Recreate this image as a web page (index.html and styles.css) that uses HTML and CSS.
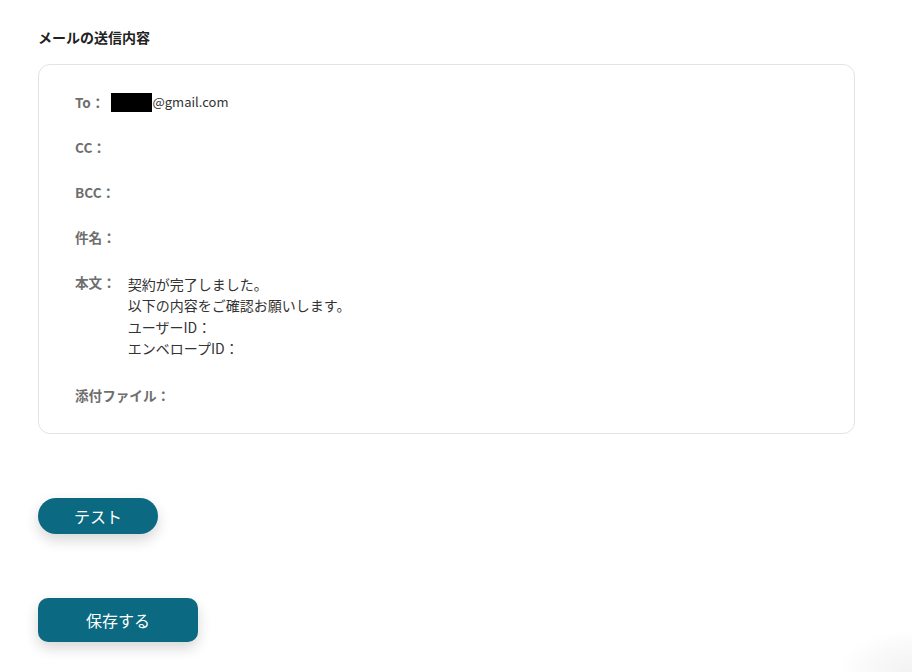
FILE: index.html
```html
<!DOCTYPE html>
<html lang="ja">
<head>
<meta charset="utf-8">
<link rel="stylesheet" href="styles.css">
</head>
<body>
<main class="page">
  <h2 class="title">メールの送信内容</h2>
  <section class="card">
    <div class="row"><span class="label">To：</span><span class="value to"><span class="redact"></span>@gmail.com</span></div>
    <div class="row"><span class="label">CC：</span></div>
    <div class="row"><span class="label">BCC：</span></div>
    <div class="row"><span class="label">件名：</span></div>
    <div class="row body-row"><span class="label">本文：</span>
      <div class="value body">
        <div>契約が完了しました。</div>
        <div>以下の内容をご確認お願いします。</div>
        <div>ユーザーID：</div>
        <div>エンベロープID：</div>
      </div>
    </div>
    <div class="row"><span class="label">添付ファイル：</span></div>
  </section>
  <div class="actions">
    <button class="btn btn-test">テスト</button>
    <button class="btn btn-save">保存する</button>
  </div>
</main>
<div class="corner-shadow"></div>
</body>
</html>
```
FILE: styles.css
```css
* { box-sizing: border-box; }
html, body { margin: 0; padding: 0; background: #fff; overflow: hidden; }
body {
  font-family: "Noto Sans CJK JP", "Noto Sans", sans-serif;
  color: #333;
  width: 912px;
  height: 672px;
  position: relative;
}
.page {
  padding: 26px 0 0 38px;
  display: flex;
  flex-direction: column;
}
.title {
  margin: 0;
  font-size: 14px;
  font-weight: 700;
  line-height: 22px;
  color: #222;
}
.card {
  margin-top: 16px;
  width: 817px;
  border: 1px solid #e3e3e3;
  border-radius: 12px;
  padding: 27px 36px 28px 36px;
  display: flex;
  flex-direction: column;
  gap: 25px;
}
.row {
  display: flex;
  align-items: flex-start;
  font-size: 13.6px;
  line-height: 20px;
}
.label {
  font-weight: 700;
  color: #6e6e6e;
  white-space: nowrap;
}
.value { color: #333; }
.to {
  margin-left: 7px;
  display: flex;
  align-items: center;
  font-size: 13px;
}
.redact {
  display: inline-block;
  width: 41px;
  height: 19px;
  background: #000;
}
.body-row .body {
  margin-left: 12px;
  margin-top: 2px;
  line-height: 21.4px;
  font-size: 14px;
}
.actions {
  display: flex;
  flex-direction: column;
  align-items: flex-start;
  margin-top: 64px;
  gap: 64px;
}
.btn {
  font-family: "Noto Sans CJK JP", "Noto Sans", sans-serif;
  border: none;
  color: #fff;
  background: #0b6a81;
  font-size: 16px;
  cursor: pointer;
  box-shadow: 0 6px 14px rgba(0, 0, 0, 0.16);
}
.btn-test {
  width: 120px;
  height: 36px;
  border-radius: 18px;
}
.btn-save {
  width: 160px;
  height: 44px;
  border-radius: 10px;
}
.corner-shadow {
  position: absolute;
  right: 0;
  bottom: 0;
  width: 70px;
  height: 40px;
  background: radial-gradient(ellipse at 100% 100%, rgba(0,0,0,0.05) 0%, rgba(0,0,0,0.02) 50%, rgba(0,0,0,0) 75%);
}
```
